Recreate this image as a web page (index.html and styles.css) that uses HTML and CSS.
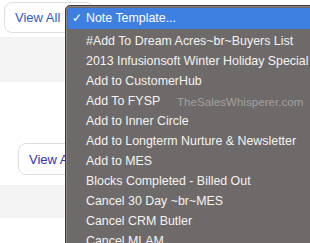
FILE: index.html
```html
<!DOCTYPE html>
<html lang="en">
<head>
    <meta charset="UTF-8">
    <meta name="viewport" content="width=device-width, initial-scale=1.0">
    <title>Note Template Menu</title>
    <link rel="stylesheet" href="styles.css">
</head>
<body>

    <div class="page">
        <div class="toolbar">
            <button class="view-all">View All</button>
        </div>
        <div class="band"></div>
        <div class="section">
            <button class="view-all second">View All</button>
        </div>
        <div class="band short"></div>
    </div>

    <ul class="menu">
        <li class="selected"><span class="check">✓</span>Note Template...</li>
        <li>#Add To Dream Acres~br~Buyers List</li>
        <li>2013 Infusionsoft Winter Holiday Special</li>
        <li>Add to CustomerHub</li>
        <li>Add To FYSP</li>
        <li>Add to Inner Circle</li>
        <li>Add to Longterm Nurture &amp; Newsletter</li>
        <li>Add to MES</li>
        <li>Blocks Completed - Billed Out</li>
        <li>Cancel 30 Day ~br~MES</li>
        <li>Cancel CRM Butler</li>
        <li>Cancel MLAM</li>
        <span class="watermark">TheSalesWhisperer.com</span>
    </ul>

</body>
</html>
```

FILE: styles.css
```css
body {
    margin: 0;
    width: 310px;
    height: 243px;
    overflow: hidden;
    position: relative;
    background: #fff;
    font-family: "Liberation Sans", Arial, sans-serif;
}
.page {
    display: flex;
    flex-direction: column;
}
.toolbar {
    height: 37px;
    padding: 2px 0 0 4px;
    box-sizing: border-box;
}
.view-all {
    height: 31px;
    width: 90px;
    padding: 0 0 0 10px;
    text-align: left;
    font-family: "Liberation Sans", Arial, sans-serif;
    font-size: 13px;
    color: #2f5cbc;
    background: #fff;
    border: 1px solid #dedede;
    border-radius: 8px;
}
.band {
    height: 45px;
    background: #f4f4f5;
}
.band.short {
    height: 33px;
}
.section {
    height: 103px;
    padding: 61px 0 0 18px;
    box-sizing: border-box;
}
.view-all.second {
    height: 32px;
    color: #3434a8;
}
.menu {
    position: absolute;
    left: 65px;
    top: 5px;
    width: 260px;
    margin: 0;
    padding: 2px 0 0 2px;
    list-style: none;
    background: #6e6a69;
    border: 1px solid #3c3938;
    border-radius: 5px 0 0 0;
    box-shadow: inset 1px 1px 0 #8a8685;
    color: #f4f3f2;
    font-size: 12.4px;
}
.menu li {
    height: 20px;
    line-height: 22px;
    padding-left: 18px;
    white-space: nowrap;
}
.menu li.selected {
    height: 21px;
    line-height: 21px;
    margin-bottom: 1px;
    padding-left: 4px;
    background: #3d80e2;
    color: #fff;
}
.check {
    display: inline-block;
    width: 14px;
}
.watermark {
    position: absolute;
    left: 111px;
    top: 89px;
    font-size: 11.6px;
    color: #a3a09e;
}
```
